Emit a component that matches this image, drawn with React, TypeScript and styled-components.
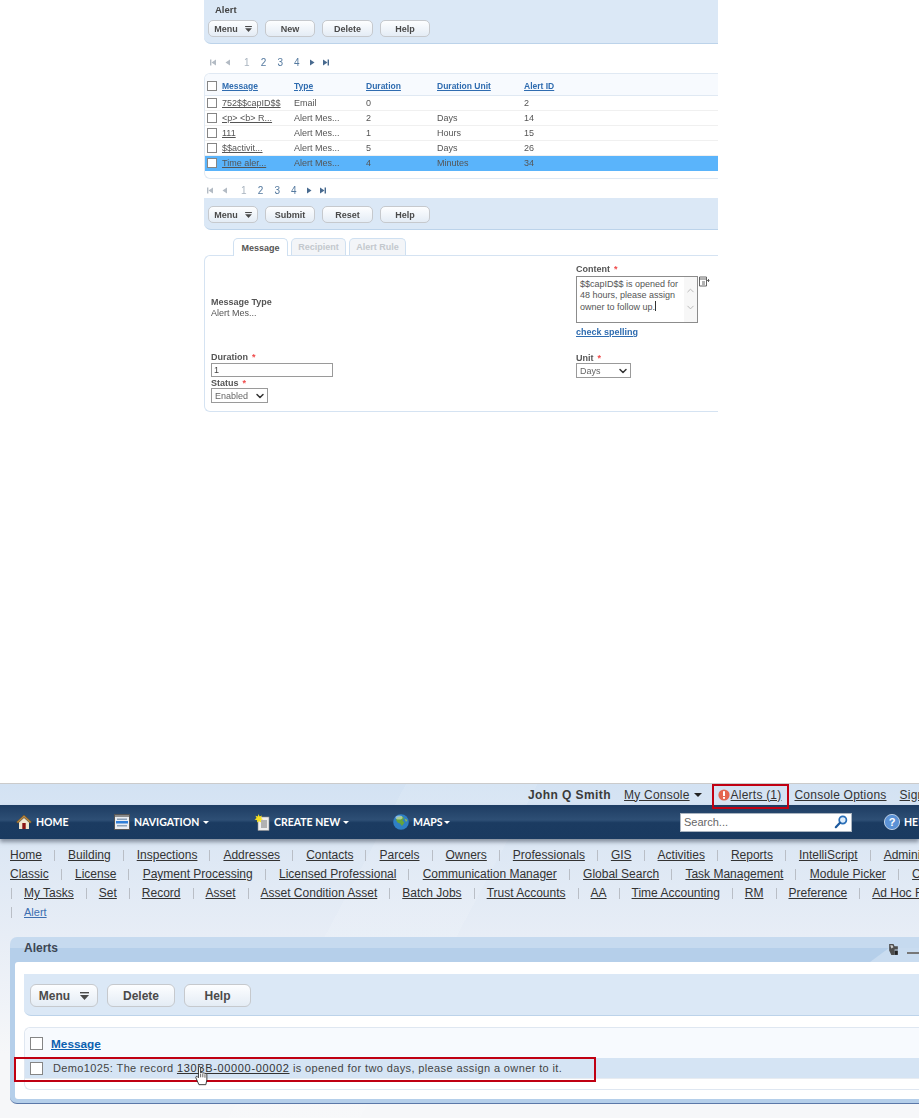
import React from "react";
import styled, { createGlobalStyle } from "styled-components";
import { ChevronDown } from "lucide-react";

const GlobalStyle = createGlobalStyle`
  html, body {
    margin: 0;
    background: #fff;
  }
  body {
    width: 919px;
    height: 1118px;
    overflow: hidden;
    font-family: "Liberation Sans", Arial, sans-serif;
  }
`;

const Shot = styled.div`
  width: 514px;
  height: 412px;
  margin-left: 204px;
  overflow: hidden;
  color: #555;
  font-size: 9px;
  filter: blur(0.4px);
`;

const Toolbar = styled.div<{ $h: number }>`
  height: ${({ $h }) => $h}px;
  box-sizing: border-box;
  background: #dbe8f6;
  border-bottom: 1px solid #bcd3ea;
  border-radius: 0 0 0 7px;
  padding: 0 0 0 4px;
  display: flex;
  flex-direction: column;
  justify-content: flex-end;
`;

const LowerToolbar = styled(Toolbar)`
  margin-top: 2px;
`;

const ToolbarTitle = styled.div`
  font-weight: 700;
  font-size: 9.5px;
  color: #444;
  padding: 0 0 5px 7px;
`;

const Buttons = styled.div<{ $big?: boolean }>`
  display: flex;
  gap: ${({ $big }) => ($big ? 9 : 7)}px;
  padding-bottom: ${({ $big }) => ($big ? 8 : 6)}px;
`;

const Btn = styled.div<{ $w: number; $big?: boolean }>`
  width: ${({ $w }) => $w}px;
  height: ${({ $big }) => ($big ? 23 : 17)}px;
  box-sizing: border-box;
  display: flex;
  align-items: center;
  justify-content: center;
  gap: ${({ $big }) => ($big ? 10 : 7)}px;
  background: linear-gradient(#fdfeff, #e4ecf5);
  border: 1px solid #c6c9cd;
  border-radius: ${({ $big }) => ($big ? 6 : 5)}px;
  font-weight: 700;
  font-size: ${({ $big }) => ($big ? 12 : 9)}px;
  color: #4a4a4a;
`;

const MenuGlyph = styled.svg<{ $big?: boolean }>`
  width: ${({ $big }) => ($big ? 9 : 7)}px;
  height: ${({ $big }) => ($big ? 8 : 6)}px;
  fill: #4a4a4a;
`;

const Pager = styled.div<{ $shift: number; $top: number }>`
  display: flex;
  align-items: center;
  height: 12px;
  margin-top: ${({ $top }) => $top}px;
  padding-left: ${({ $shift }) => $shift}px;
  font-size: 10px;
  color: #54799f;
`;

const PagerIcon = styled.svg<{ $w: number }>`
  width: 6px;
  height: 7px;
  margin-right: ${({ $w }) => $w}px;
`;

const PageNum = styled.span<{ $off?: boolean }>`
  width: 16.7px;
  color: ${({ $off }) => ($off ? "#a9b4bf" : "#54799f")};
  &:last-of-type {
    width: 14.5px;
  }
`;

const TableBox = styled.div`
  margin-top: 5px;
  height: 106px;
  box-sizing: border-box;
  border: 1px solid #e0e9f3;
  border-right: 0;
  border-radius: 6px 0 0 6px;
  overflow: hidden;
`;

const Row = styled.div<{ $head?: boolean; $on?: boolean }>`
  display: grid;
  grid-template-columns: 15px 72px 72px 71px 87px 1fr;
  align-items: center;
  height: ${({ $head }) => ($head ? 22 : 15)}px;
  padding: ${({ $head }) => ($head ? 2 : 0)}px 0 0 2px;
  background: ${({ $head, $on }) =>
    $head ? "#f7fafe" : $on ? "#5ab4fb" : "#fff"};
  border-bottom: 1px solid ${({ $head, $on }) =>
    $on ? "#5ab4fb" : $head ? "#e0e9f3" : "#f0f0f0"};
  box-sizing: border-box;
  color: #555;
`;

const Check = styled.span<{ $big?: boolean }>`
  display: block;
  width: ${({ $big }) => ($big ? 11 : 8)}px;
  height: ${({ $big }) => ($big ? 11 : 8)}px;
  background: #fff;
  border: 1px solid #858585;
`;

const HeadLink = styled.span`
  color: #2f6cb0;
  font-weight: 700;
  text-decoration: underline;
  font-size: 8.5px;
`;

const CellLink = styled.span`
  color: #555;
  text-decoration: underline;
`;

const Tabs = styled.div`
  display: flex;
  gap: 3px;
  height: 17px;
  margin-top: 8px;
  padding-left: 29px;
`;

const Tab = styled.div<{ $on?: boolean; $w: number }>`
  width: ${({ $w }) => $w}px;
  box-sizing: border-box;
  display: flex;
  align-items: center;
  justify-content: center;
  background: ${({ $on }) => ($on ? "#fff" : "#f3f5f8")};
  border: 1px solid #cfe0f1;
  border-bottom: 0;
  border-radius: 5px 5px 0 0;
  font-weight: 700;
  color: ${({ $on }) => ($on ? "#555" : "#c3c8cd")};
  position: relative;
  z-index: 1;
  margin-bottom: ${({ $on }) => ($on ? -1 : 0)}px;
`;

const FormBox = styled.div`
  height: 157px;
  box-sizing: border-box;
  border: 1px solid #d5e3f2;
  border-right: 0;
  border-radius: 6px 0 0 6px;
  display: grid;
  grid-template-columns: 365px 1fr;
  padding: 8px 0 0 6px;
`;

const FormColumn = styled.div`
  display: flex;
  flex-direction: column;
`;

const TypeBlock = styled.div`
  box-sizing: border-box;
  padding-top: 33px;
  line-height: 12px;
  height: 88px;
`;

const Label = styled.div`
  font-weight: 700;
  color: #555;
  line-height: 10px;
  height: 10px;
`;

const Req = styled.span`
  color: #f04a4a;
  margin-left: 4px;
`;

const ContentRow = styled.div`
  display: flex;
  margin-top: 2px;
  align-items: flex-start;
  gap: 1px;
`;

const TextBox = styled.div`
  width: 122px;
  height: 47px;
  box-sizing: border-box;
  border: 1px solid #8c8c8c;
  padding: 2px 16px 0 3px;
  line-height: 11px;
  position: relative;
  color: #555;
  background: linear-gradient(90deg, #fff 107px, #f7f7f7 107px);
`;

const ScrollArrows = styled.div`
  position: absolute;
  right: 1px;
  top: 8px;
  display: flex;
  flex-direction: column;
  gap: 6px;
  color: #b5b5b5;
`;

const FlipChevron = styled(ChevronDown)`
  transform: rotate(180deg);
`;

const Caret = styled.span`
  display: inline-block;
  width: 1px;
  height: 10px;
  vertical-align: -1px;
  background: #333;
`;

const SpellLink = styled.div`
  margin-top: 4px;
  height: 26px;
  font-weight: 700;
  color: #2f6cb0;
  text-decoration: underline;
`;

const TextField = styled.div`
  width: 122px;
  height: 14px;
  box-sizing: border-box;
  margin-top: 1px;
  border: 1px solid #9a9a9a;
  padding-left: 2px;
  line-height: 13px;
  color: #444;
`;

const SelectBox = styled.div<{ $w: number }>`
  width: ${({ $w }) => $w}px;
  height: 15px;
  box-sizing: border-box;
  border: 1px solid #9a9a9a;
  padding: 0 1px 0 3px;
  display: flex;
  align-items: center;
  justify-content: space-between;
  color: #666;
`;

const StatusLabel = styled(Label)`
  margin-top: 1px;
`;

const Console = styled.div`
  margin-top: 371px;
  width: 919px;
  height: 335px;
  overflow: hidden;
  border-top: 1px solid #cbcbcb;
  background:
    linear-gradient(118deg, transparent 0 37%, rgba(255, 255, 255, 0.1) 37% 49%, transparent 49%),
    linear-gradient(#d3e2f3 0, #dce7f4 60px, #e7edf6 150px, #f6f7f9 270px);
`;

const TopBar = styled.div`
  height: 21px;
  display: flex;
  align-items: center;
  padding-left: 528px;
  font-size: 12px;
  letter-spacing: 0.22px;
  color: #333;
  white-space: nowrap;
`;

const UserName = styled.b`
  font-size: 12px;
  letter-spacing: 0.42px;
  margin-right: 13px;
  color: #3a3a3a;
`;

const TopLink = styled.span`
  text-decoration: underline;
  color: #333;
`;

const RecordLink = styled(TopLink)`
  letter-spacing: 0.65px;
`;

const SignLink = styled(TopLink)`
  margin-left: 13px;
`;

const DownArrow = styled.i<{ $c: string; $s: number; $gap?: number }>`
  display: inline-block;
  border-left: ${({ $s }) => $s}px solid transparent;
  border-right: ${({ $s }) => $s}px solid transparent;
  border-top: ${({ $s }) => $s}px solid ${({ $c }) => $c};
  margin-left: ${({ $gap }) => $gap ?? 4}px;
  vertical-align: 1px;
`;

const AlertsItem = styled.div`
  position: relative;
  display: flex;
  align-items: center;
  gap: 1px;
  margin: 0 13px 0 16px;
`;

const RedBox = styled.div`
  position: absolute;
  border: 2px solid #c00012;
  box-sizing: border-box;
  z-index: 3;
  pointer-events: none;
`;

const AlertsBox = styled(RedBox)`
  left: -6px;
  right: -8px;
  top: -4px;
  height: 25px;
`;

const NavBar = styled.div`
  height: 34px;
  display: grid;
  grid-template-columns: 98px 140px 139px 287px 204px 1fr;
  align-items: center;
  padding-left: 16px;
  background: linear-gradient(#1d3c62 0, #2e4f75 44%, #1b3b61 52%, #1a3a60 100%);
  box-shadow: 0 3px 4px rgba(60, 70, 85, 0.55);
  color: #fff;
  font-family: Lato, "Liberation Sans", sans-serif;
  font-size: 10.5px;
  font-weight: 700;
  white-space: nowrap;
  overflow: hidden;
`;

const NavItem = styled.div`
  display: flex;
  align-items: center;
  gap: 4px;
`;

const SearchBox = styled.div`
  width: 172px;
  height: 19px;
  box-sizing: border-box;
  background: #fff;
  border: 1px solid #aab4c0;
  padding: 0 3px 0 3px;
  display: flex;
  align-items: center;
  justify-content: space-between;
  color: #666;
  font-family: "Liberation Sans", sans-serif;
  font-size: 11px;
  font-weight: 400;
`;

const LinkRows = styled.div`
  padding: 7px 0 0 10px;
  height: 98px;
  box-sizing: border-box;
  font-size: 12px;
  line-height: 19px;
  color: #333;
`;

const LinkRow = styled.div`
  display: flex;
  white-space: nowrap;
  height: 19px;
`;

const MenuLink = styled.span<{ $blue?: boolean; $small?: boolean }>`
  flex: none;
  text-decoration: underline;
  color: ${({ $blue }) => ($blue ? "#3d6fb0" : "#333")};
  font-size: ${({ $small }) => ($small ? 11 : 12)}px;
`;

const Sep = styled.span<{ $first?: boolean; $r?: number }>`
  flex: none;
  width: 1px;
  height: 11px;
  margin: 4px ${({ $r }) => $r ?? 13}px 0 ${({ $first }) => ($first ? 1 : 12)}px;
  background: #b9bec6;
`;

const Panel = styled.div`
  position: relative;
  margin: 0 0 0 10px;
  height: 167px;
  box-sizing: border-box;
  background: linear-gradient(#c6daef 0 11px, #b5cfea 11px);
  border-bottom: 1px solid #5b78a8;
  border-radius: 7px 0 0 7px;
  padding: 25px 0 4px 5px;
`;

const PanelTitle = styled.div`
  position: absolute;
  left: 14px;
  top: 4px;
  font-size: 12px;
  font-weight: 700;
  color: #3c4654;
`;

const PanelCorner = styled.div`
  position: absolute;
  right: 0;
  top: 11px;
  width: 49px;
  height: 14px;
  background: #c9dcf0;
  clip-path: polygon(100% 0, 100% 100%, 0 100%, 19px 0);
`;

const PanelIcons = styled.div`
  position: absolute;
  right: 0;
  top: 6px;
  width: 31px;
  display: flex;
  align-items: flex-start;
  gap: 8px;
`;

const Dash = styled.span`
  width: 12px;
  height: 2px;
  margin-top: 9px;
  background: #777;
`;

const PanelBody = styled.div`
  height: 137px;
  background: #fff;
  border-radius: 3px 0 0 3px;
  padding: 12px 0 0 9px;
  box-sizing: border-box;
`;

const AlertToolbar = styled(Toolbar)`
  padding-left: 6px;
`;

const AlertTable = styled.div`
  margin-top: 11px;
  height: 63px;
  box-sizing: border-box;
  border: 1px solid #dfe7f1;
  border-right: 0;
  border-radius: 6px 0 0 6px;
  background: #fff;
`;

const AlertHead = styled.div`
  height: 30px;
  box-sizing: border-box;
  display: flex;
  align-items: center;
  gap: 8px;
  padding: 1px 0 0 5px;
  background: #f7fafe;
  border-radius: 6px 0 0 0;
  font-size: 11.8px;
  font-weight: 700;
  color: #0b5fb0;
`;

const AlertHeadLink = styled.span`
  text-decoration: underline;
`;

const AlertRow = styled.div`
  position: relative;
  height: 20px;
  display: flex;
  align-items: center;
  padding-left: 5px;
  background: #d5e4f4;
  border-bottom: 1px solid #e8ecf1;
  font-size: 11px;
  letter-spacing: 0.38px;
  color: #444;
  white-space: nowrap;
`;

const RowText = styled.span`
  margin-left: 10px;
`;

const RowBox = styled(RedBox)`
  left: -11px;
  top: -1px;
  width: 582px;
  height: 25px;
`;

const HandCursor = styled.svg`
  position: absolute;
  left: 170px;
  top: 8px;
  width: 13px;
  height: 20px;
  z-index: 4;
`;

const Home = () => (
  <svg width="16" height="16" viewBox="0 0 16 16">
    <path d="M8 1 0.5 8 2 9.2 8 3.6 14 9.2 15.5 8Z" fill="#b8863e" stroke="#6b4a1c" strokeWidth=".5" />
    <path d="M3 8.5 8 4l5 4.5V15H3Z" fill="#f1e6cf" />
    <rect x="6.3" y="9" width="3.4" height="6" fill="#8c1414" />
  </svg>
);

const NavIcon = () => (
  <svg width="16" height="16" viewBox="0 0 16 16">
    <rect x=".5" y=".5" width="15" height="15" fill="#e9edf2" stroke="#555" />
    <rect x="1" y="1" width="14" height="2" fill="#8b8b8b" />
    <rect x="3" y="4.500" width="10" height="1.500" fill="#8aa0b8" />
    <rect x="2" y="7" width="12" height="2.500" fill="#2f7ed8" />
    <rect x="3" y="11" width="10" height="1.500" fill="#8aa0b8" />
  </svg>
);

const CreateIcon = () => (
  <svg width="16" height="17" viewBox="0 0 16 17">
    <rect x="4" y="3" width="11" height="13.500" fill="#eee" stroke="#8d8d8d" strokeWidth=".6" />
    <path d="M7 7h6M7 9h6M7 11h6M7 13h6" stroke="#666" strokeWidth=".9" />
    <path d="M4.500 0 5.600 2.400 8 1.600 7 3.900 9 5.200 6.800 6 7.200 8.400 5 7.200 3 8.600 3.200 6.200 .6 5.600 2.600 4 1.400 1.800 3.800 2.400Z" fill="#f7e11f" />
  </svg>
);

const GlobeIcon = () => (
  <svg width="16" height="16" viewBox="0 0 16 16">
    <circle cx="8" cy="8" r="7.800" fill="#2f7fc4" />
    <path d="M4 3.500 8.500 2 11 4 9.500 6.500 11.500 8.500 9 12 7 9.500 4.500 8.500 3 6Z" fill="#66a53c" />
    <path d="M11.500 4.500 14.500 6 13 8Z" fill="#8dbb55" />
    <ellipse cx="6" cy="3.600" rx="3.500" ry="2" fill="#fff" opacity=".45" />
  </svg>
);

const SearchIcon = () => (
  <svg width="14" height="14" viewBox="0 0 14 14">
    <circle cx="8.800" cy="5" r="3.600" fill="#dfeefc" stroke="#2a6fb8" strokeWidth="1.700" />
    <path d="M6 7.800 1.800 12.200" stroke="#1d5a9e" strokeWidth="2.200" strokeLinecap="round" />
  </svg>
);

const HelpIcon = () => (
  <svg width="16" height="16" viewBox="0 0 16 16">
    <circle cx="8" cy="8" r="7.600" fill="#5b92d6" stroke="#dbe8f8" strokeWidth=".8" />
    <text x="8" y="12" textAnchor="middle" fontSize="11" fontWeight="700" fill="#fff" fontFamily="Liberation Sans">?</text>
  </svg>
);

const AlertIcon = () => (
  <svg width="12" height="12" viewBox="0 0 12 12">
    <circle cx="6" cy="6" r="5.600" fill="#e4664f" />
    <rect x="5" y="2.200" width="2" height="4.800" fill="#fff" />
    <rect x="5" y="8" width="2" height="1.800" fill="#fff" />
  </svg>
);

const PanelRefresh = () => (
  <svg width="11" height="13" viewBox="0 0 10 12">
    <path d="M1 1h4l1 2h3v3H6v5H3L1 7Z" fill="#4d4d4d" />
    <path d="M2 2h2l1 2-2 1Z" fill="#cfcfcf" />
    <path d="M6 7h3v4H6Z" fill="#222" />
  </svg>
);

const ExportIcon = () => (
  <svg width="11" height="11" viewBox="0 0 11 11">
    <path d="M.5 1h7v9h-7ZM.5 3h7M3 6h3M3 8h3" fill="#fff" stroke="#555" strokeWidth=".9" />
    <path d="M8 4.500h2.500M9.500 3v3" stroke="#555" strokeWidth=".9" />
  </svg>
);

const Menu = ({ big }: { big?: boolean }) => (
  <Btn $w={big ? 68 : 50} $big={big}>
    Menu
    <MenuGlyph $big={big} viewBox="0 0 9 8">
      <rect width="9" height="1.400" />
      <path d="M0 3h9L4.500 8Z" />
    </MenuGlyph>
  </Btn>
);

const PagerBar = ({ shift, top }: { shift: number; top: number }) => (
  <Pager $shift={shift} $top={top}>
    <PagerIcon $w={9} viewBox="0 0 6 6" fill="#b3bbc4">
      <rect width="1.400" height="6" />
      <path d="M6 0v6L1.500 3Z" />
    </PagerIcon>
    <PagerIcon $w={13} viewBox="0 0 6 6" fill="#b3bbc4">
      <path d="M5 0v6L.5 3Z" />
    </PagerIcon>
    <PageNum $off>1</PageNum>
    <PageNum>2</PageNum>
    <PageNum>3</PageNum>
    <PageNum>4</PageNum>
    <PagerIcon $w={8} viewBox="0 0 6 6" fill="#486a8f">
      <path d="M1 0v6L5.500 3Z" />
    </PagerIcon>
    <PagerIcon $w={0} viewBox="0 0 6 6" fill="#486a8f">
      <path d="M0 0v6L4.500 3Z" />
      <rect x="4.600" width="1.400" height="6" />
    </PagerIcon>
  </Pager>
);

const alertRows = [
  ["752$$capID$$", "Email", "0", "", "2"],
  ["<p> <b> R...", "Alert Mes...", "2", "Days", "14"],
  ["111", "Alert Mes...", "1", "Hours", "15"],
  ["$$activit...", "Alert Mes...", "5", "Days", "26"],
  ["Time aler...", "Alert Mes...", "4", "Minutes", "34"],
];

const menuRows: { start?: boolean; gap: number; links: string[] }[] = [
  {
    gap: 13,
    links: ["Home", "Building", "Inspections", "Addresses", "Contacts", "Parcels", "Owners", "Professionals", "GIS", "Activities", "Reports", "IntelliScript", "Administration"],
  },
  {
    gap: 13.3,
    links: ["Classic", "License", "Payment Processing", "Licensed Professional", "Communication Manager", "Global Search", "Task Management", "Module Picker", "Cashier"],
  },
  {
    start: true,
    gap: 12,
    links: ["My Tasks", "Set", "Record", "Asset", "Asset Condition Asset", "Batch Jobs", "Trust Accounts", "AA", "Time Accounting", "RM", "Preference", "Ad Hoc Reports"],
  },
];

export default function App(): React.JSX.Element {
  return (
    <>
      <GlobalStyle />
      <Shot>
        <Toolbar $h={44}>
          <ToolbarTitle>Alert</ToolbarTitle>
          <Buttons>
            <Menu />
            <Btn $w={50}>New</Btn>
            <Btn $w={51}>Delete</Btn>
            <Btn $w={50}>Help</Btn>
          </Buttons>
        </Toolbar>
        <PagerBar shift={6} top={12} />
        <TableBox>
          <Row $head>
            <Check />
            <HeadLink>Message</HeadLink>
            <HeadLink>Type</HeadLink>
            <HeadLink>Duration</HeadLink>
            <HeadLink>Duration Unit</HeadLink>
            <HeadLink>Alert ID</HeadLink>
          </Row>
          {alertRows.map((r, i) => (
            <Row key={r[0]} $on={i === 4}>
              <Check />
              <CellLink>{r[0]}</CellLink>
              <span>{r[1]}</span>
              <span>{r[2]}</span>
              <span>{r[3]}</span>
              <span>{r[4]}</span>
            </Row>
          ))}
        </TableBox>
        <PagerBar shift={3} top={5} />
        <LowerToolbar $h={32}>
          <Buttons>
            <Menu />
            <Btn $w={50}>Submit</Btn>
            <Btn $w={51}>Reset</Btn>
            <Btn $w={50}>Help</Btn>
          </Buttons>
        </LowerToolbar>
        <Tabs>
          <Tab $on $w={55}>Message</Tab>
          <Tab $w={55}>Recipient</Tab>
          <Tab $w={57}>Alert Rule</Tab>
        </Tabs>
        <FormBox>
          <FormColumn>
            <TypeBlock>
              <Label>Message Type</Label>
              Alert Mes...
            </TypeBlock>
            <Label>
              Duration<Req>*</Req>
            </Label>
            <TextField>1</TextField>
            <StatusLabel>
              Status<Req>*</Req>
            </StatusLabel>
            <SelectBox $w={57}>
              Enabled
              <ChevronDown size={12} strokeWidth={3} color="#333" />
            </SelectBox>
          </FormColumn>
          <FormColumn>
            <Label>
              Content<Req>*</Req>
            </Label>
            <ContentRow>
              <TextBox>
                $$capID$$ is opened for 48 hours, please assign owner to follow up.
                <Caret />
                <ScrollArrows>
                  <FlipChevron size={11} />
                  <ChevronDown size={11} />
                </ScrollArrows>
              </TextBox>
              <ExportIcon />
            </ContentRow>
            <SpellLink>check spelling</SpellLink>
            <Label>
              Unit<Req>*</Req>
            </Label>
            <SelectBox $w={55}>
              Days
              <ChevronDown size={12} strokeWidth={3} color="#333" />
            </SelectBox>
          </FormColumn>
        </FormBox>
      </Shot>

      <Console>
        <TopBar>
          <UserName>John Q Smith</UserName>
          <TopLink>My Console</TopLink>
          <DownArrow $c="#222" $s={4} />
          <AlertsItem>
            <AlertIcon />
            <TopLink>Alerts (1)</TopLink>
            <AlertsBox />
          </AlertsItem>
          <TopLink>Console Options</TopLink>
          <SignLink>Sign Out</SignLink>
        </TopBar>
        <NavBar>
          <NavItem>
            <Home />
            HOME
          </NavItem>
          <NavItem>
            <NavIcon />
            NAVIGATION<DownArrow $c="#fff" $s={3.5} $gap={0} />
          </NavItem>
          <NavItem>
            <CreateIcon />
            CREATE NEW<DownArrow $c="#fff" $s={3.5} $gap={-1} />
          </NavItem>
          <NavItem>
            <GlobeIcon />
            MAPS<DownArrow $c="#fff" $s={3.5} $gap={-2} />
          </NavItem>
          <SearchBox>
            Search...
            <SearchIcon />
          </SearchBox>
          <NavItem>
            <HelpIcon />
            HELP
          </NavItem>
        </NavBar>
        <LinkRows>
          {menuRows.map((row) => (
            <LinkRow key={row.links[0]}>
              {row.start && <Sep $first $r={row.gap} />}
              {row.links.map((link, i) => (
                <React.Fragment key={link}>
                  {i > 0 && <Sep $r={row.gap} />}
                  <MenuLink>{link}</MenuLink>
                </React.Fragment>
              ))}
            </LinkRow>
          ))}
          <LinkRow>
            <Sep $first $r={12} />
            <MenuLink $blue $small>Alert</MenuLink>
          </LinkRow>
        </LinkRows>
        <Panel>
          <PanelTitle>Alerts</PanelTitle>
          <PanelCorner />
          <PanelIcons>
            <PanelRefresh />
            <Dash />
          </PanelIcons>
          <PanelBody>
            <AlertToolbar $h={42}>
              <Buttons $big>
                <Menu big />
                <Btn $w={68} $big>Delete</Btn>
                <Btn $w={67} $big>Help</Btn>
              </Buttons>
            </AlertToolbar>
            <AlertTable>
              <AlertHead>
                <Check $big />
                <AlertHeadLink>Message</AlertHeadLink>
              </AlertHead>
              <AlertRow>
                <Check $big />
                <RowText>
                  Demo1025: The record <RecordLink>130BB-00000-00002</RecordLink> is opened for two days, please assign a owner to it.
                </RowText>
                <RowBox />
                <HandCursor viewBox="0 0 15 23">
                  <path
                    d="M4 1.500c1 -1 2 -1 2.500 0V8c1 -.8 2 -.6 2.500 .2 1-.6 2-.3 2.500 .5 1-.4 2.200 .2 2.200 1.300V16l-1.200 5.500H4.500L1 13.500c-.5-1.300 .8-2 1.800-1.200L4 13.500Z"
                    fill="#fff"
                    stroke="#222"
                    strokeWidth="1"
                  />
                  <path d="M6.500 9v4M9 9v4M11.500 9.500v4" stroke="#222" strokeWidth=".8" />
                </HandCursor>
              </AlertRow>
            </AlertTable>
          </PanelBody>
        </Panel>
      </Console>
    </>
  );
}
